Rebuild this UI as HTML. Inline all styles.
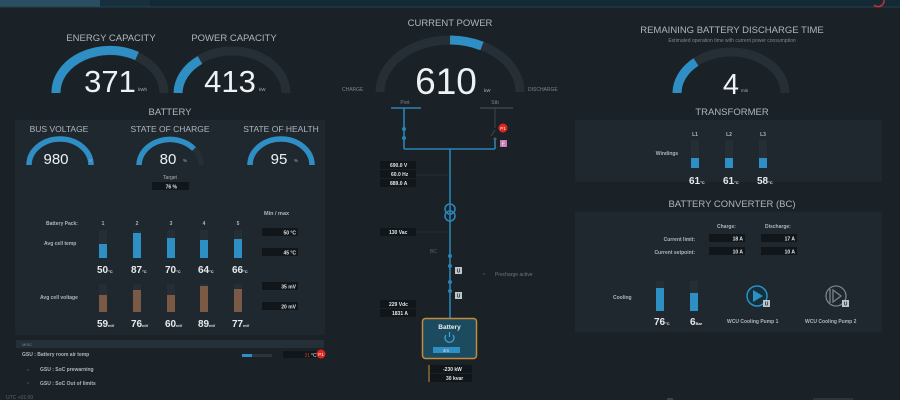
<!DOCTYPE html>
<html><head><meta charset="utf-8"><style>
html,body{margin:0;padding:0;background:#1a2228;}
svg{display:block;font-family:"Liberation Sans",sans-serif;}
</style></head><body>
<svg width="900" height="400" viewBox="0 0 900 400" xmlns="http://www.w3.org/2000/svg">
<rect width="900" height="400" fill="#1a2228"/>
<!-- top bar -->
<rect x="0" y="0" width="900" height="7" fill="#17303d"/>
<rect x="0" y="0" width="100" height="7" fill="#2a4f60"/>
<rect x="150" y="0" width="750" height="7" fill="#132a35"/>
<line x1="0" y1="7" x2="900" y2="7" stroke="#24404e"/>
<path d="M884 0 A6 6 0 0 1 874 5" stroke="#d03030" stroke-width="1.5" fill="none"/>

<!-- panels -->
<rect x="15" y="120" width="310" height="215" fill="#1f282f"/>
<rect x="16" y="340" width="308" height="8" fill="#252f37"/>
<text x="22" y="346" font-size="4" fill="#7a848b">MISC</text>
<rect x="575" y="120" width="307" height="62" fill="#1f282f"/>
<rect x="575" y="212" width="307" height="120" fill="#1f282f"/>

<g fill="none" stroke-width="9">
<path d="M56 93 A54 42 0 0 1 164 93" stroke="#262f36"/>
<path d="M56 93 A54 42 0 0 1 137 56" stroke="#2f8fc4"/>
<path d="M178 93 A54 42 0 0 1 286 93" stroke="#262f36"/>
<path d="M178 93 A54 42 0 0 1 200 60" stroke="#2f8fc4"/>
<path d="M380 92 A70 52 0 0 1 520 92" stroke="#262f36"/>
<path d="M450 40 A70 52 0 0 1 482 46" stroke="#2f8fc4"/>
<path d="M677 93 A54 41 0 0 1 785 93" stroke="#262f36"/>
<path d="M677 93 A54 41 0 0 1 696 62" stroke="#2f8fc4"/>
</g>
<g fill="none" stroke-width="5.5">
<path d="M29 165 A31 26 0 0 1 91 165" stroke="#2f8fc4"/>
<path d="M139 165 A31 26 0 0 1 201 165" stroke="#262f36"/>
<path d="M139 165 A31 26 0 0 1 194 149" stroke="#2f8fc4"/>
<path d="M250 165 A31 26 0 0 1 312 165" stroke="#2f8fc4"/>
</g>

<g fill="#aeb6bc" font-size="9.5" text-anchor="middle">
<text x="111" y="41">ENERGY CAPACITY</text>
<text x="234" y="41">POWER CAPACITY</text>
<text x="170" y="115">BATTERY</text>
<text x="59" y="132" font-size="8.5">BUS VOLTAGE</text>
<text x="170" y="132" font-size="8.5">STATE OF CHARGE</text>
<text x="281" y="132" font-size="8.5">STATE OF HEALTH</text>
<text x="450" y="26">CURRENT POWER</text>
<text x="732" y="33">REMAINING BATTERY DISCHARGE TIME</text>
<text x="732" y="115">TRANSFORMER</text>
<text x="732" y="207">BATTERY CONVERTER (BC)</text>
<text x="732" y="42" font-size="5" fill="#7c868d">Estimated operation time with current power consumption</text>
</g>
<g fill="#eef2f4" text-anchor="middle">
<text x="110" y="92" font-size="31">371</text>
<text x="230" y="92" font-size="31">413</text>
<text x="446" y="94" font-size="37">610</text>
<text x="731" y="94" font-size="29">4</text>
<text x="56" y="164" font-size="15">980</text>
<text x="168" y="164" font-size="15">80</text>
<text x="279" y="164" font-size="15">95</text>
</g>
<g fill="#aeb6bc" font-size="4.5">
<text x="138" y="91">kWh</text><text x="259" y="91">kW</text>
<text x="484" y="92">kW</text><text x="741" y="92">min</text>
<text x="89" y="162">V</text><text x="183" y="162">%</text><text x="294" y="162">%</text>
<text x="342" y="91" fill="#7a848b" font-size="5">CHARGE</text>
<text x="528" y="91" fill="#7a848b" font-size="5">DISCHARGE</text>
</g>
<text x="170" y="179" font-size="5" fill="#aeb6bc" text-anchor="middle">Target</text>
<rect x="152" y="182" width="37" height="8" fill="#10161a"/>
<text x="177" y="188.5" font-size="5" fill="#dfe4e7" text-anchor="end" font-weight="bold">76 %</text>

<!-- battery packs -->
<g font-size="5" fill="#aeb6bc" font-weight="bold">
<text x="46" y="225">Battery Pack:</text>
<text x="44" y="245">Avg cell temp</text>
<text x="40" y="299">Avg cell voltage</text>
<text x="264" y="215" font-size="5.5">Min / max</text>
<text x="103" y="225" text-anchor="middle">1</text><text x="137" y="225" text-anchor="middle">2</text><text x="171" y="225" text-anchor="middle">3</text><text x="204" y="225" text-anchor="middle">4</text><text x="238" y="225" text-anchor="middle">5</text>
</g>
<g fill="#252e35">
<rect x="99" y="230" width="8" height="28"/><rect x="133" y="230" width="8" height="28"/><rect x="167" y="230" width="8" height="28"/><rect x="200" y="230" width="8" height="28"/><rect x="234" y="230" width="8" height="28"/>
<rect x="99" y="284" width="8" height="28"/><rect x="133" y="284" width="8" height="28"/><rect x="167" y="284" width="8" height="28"/><rect x="200" y="284" width="8" height="28"/><rect x="234" y="284" width="8" height="28"/>
</g>
<g fill="#2d8fc4">
<rect x="99" y="244" width="8" height="14"/><rect x="133" y="233" width="8" height="25"/><rect x="167" y="238" width="8" height="20"/><rect x="200" y="240" width="8" height="18"/><rect x="234" y="239" width="8" height="19"/>
</g>
<g fill="#7a5a45">
<rect x="99" y="295" width="8" height="17"/><rect x="133" y="290" width="8" height="22"/><rect x="167" y="295" width="8" height="17"/><rect x="200" y="286" width="8" height="26"/><rect x="234" y="289" width="8" height="23"/>
</g>
<g font-size="10" fill="#e6eaec" font-weight="bold">
<text x="97" y="273">50<tspan font-size="4">°C</tspan></text><text x="131" y="273">87<tspan font-size="4">°C</tspan></text><text x="165" y="273">70<tspan font-size="4">°C</tspan></text><text x="198" y="273">64<tspan font-size="4">°C</tspan></text><text x="232" y="273">66<tspan font-size="4">°C</tspan></text>
<text x="97" y="327">59<tspan font-size="4">mV</tspan></text><text x="131" y="327">76<tspan font-size="4">mV</tspan></text><text x="165" y="327">60<tspan font-size="4">mV</tspan></text><text x="198" y="327">89<tspan font-size="4">mV</tspan></text><text x="232" y="327">77<tspan font-size="4">mV</tspan></text>
</g>
<g fill="#10161a"><rect x="262" y="228" width="36" height="8"/><rect x="262" y="248" width="36" height="8"/><rect x="262" y="282" width="36" height="8"/><rect x="262" y="302" width="36" height="8"/></g>
<g font-size="5" fill="#dfe4e7" text-anchor="end" font-weight="bold"><text x="296" y="234.5">50 °C</text><text x="296" y="254.5">45 °C</text><text x="296" y="288.5">35 mV</text><text x="296" y="308.5">20 mV</text></g>

<!-- misc rows -->
<g font-size="5" fill="#aeb6bc" font-weight="bold">
<text x="22" y="356">GSU : Battery room air temp</text>
<text x="40" y="371">GSU : SoC prewarning</text>
<text x="40" y="385">GSU : SoC Out of limits</text>
<text x="6" y="399" fill="#5a646b" font-weight="normal">UTC +01:00</text>
</g>
<rect x="242" y="354" width="30" height="3" fill="#2a353d"/><rect x="242" y="354" width="10" height="3" fill="#2d8fc4"/>
<rect x="283" y="351" width="35" height="7" fill="#10161a"/>
<text x="310" y="357" font-size="5" fill="#d0302a" text-anchor="end">31</text><text x="311" y="357" font-size="5" fill="#dfe4e7">°C</text>
<circle cx="321" cy="354" r="4.5" fill="#e0261f"/><text x="321" y="356" font-size="4.5" fill="#fff" text-anchor="middle">P1</text>
<circle cx="28" cy="370" r="1" fill="#3a444b"/><circle cx="28" cy="383" r="1" fill="#3a444b"/>

<!-- single line diagram -->
<text x="405" y="104" font-size="5" fill="#7a848b" text-anchor="middle">Port</text>
<text x="495" y="104" font-size="5" fill="#7a848b" text-anchor="middle">Stb</text>
<g stroke="#2a84b5" stroke-width="1.6" fill="none">
<line x1="391" y1="108" x2="421" y2="108"/>
<line x1="404" y1="108" x2="404" y2="149"/>
<line x1="404" y1="149" x2="495" y2="149"/>
<line x1="495" y1="139" x2="495" y2="149"/>
<line x1="450" y1="149" x2="450" y2="318"/>
<circle cx="450" cy="209" r="5"/><circle cx="450" cy="216" r="5"/>
</g>
<line x1="480" y1="108" x2="513" y2="108" stroke="#3a454d" stroke-width="1.5"/>
<line x1="495" y1="108" x2="495" y2="128" stroke="#3a454d" stroke-width="1"/>
<line x1="495" y1="130" x2="491" y2="136" stroke="#3a454d" stroke-width="1"/>
<g fill="#2a84b5"><circle cx="404" cy="129" r="2"/><circle cx="404" cy="138" r="2"/><circle cx="450" cy="256" r="2"/><circle cx="450" cy="266" r="2"/><circle cx="450" cy="282" r="2"/><circle cx="450" cy="291" r="2"/></g>
<circle cx="495" cy="139" r="1.5" fill="#55606a"/>
<circle cx="503" cy="128" r="4.5" fill="#e0261f"/><text x="503" y="130" font-size="4.5" fill="#fff" text-anchor="middle">P1</text>
<rect x="500" y="140" width="7" height="7" fill="#c27ab2"/><text x="503.5" y="145.5" font-size="5" fill="#fff" text-anchor="middle">E</text>
<rect x="455" y="267" width="7" height="7" fill="#bfc6cb"/><text x="458.5" y="272.5" font-size="5" fill="#1a2228" text-anchor="middle" font-weight="bold">U</text>
<rect x="455" y="292" width="7" height="7" fill="#bfc6cb"/><text x="458.5" y="297.5" font-size="5" fill="#1a2228" text-anchor="middle" font-weight="bold">U</text>
<text x="430" y="253" font-size="5" fill="#5a646b">BC</text>
<circle cx="484" cy="274" r="1" fill="#3a444b"/>
<text x="495" y="276" font-size="5" fill="#6e787f">Precharge active</text>
<g fill="#10161a"><rect x="380" y="161" width="36" height="8"/><rect x="380" y="170" width="36" height="8"/><rect x="380" y="179" width="36" height="8"/><rect x="380" y="228" width="36" height="8"/><rect x="380" y="300" width="36" height="8"/><rect x="380" y="309" width="36" height="8"/><rect x="430" y="365" width="42" height="8"/><rect x="430" y="374" width="42" height="8"/></g>
<line x1="429" y1="365" x2="429" y2="382" stroke="#c58a3a"/>
<g font-size="5" fill="#dfe4e7" font-weight="bold"><text x="390" y="167">690.0 V</text><text x="391" y="176">60.0 Hz</text><text x="390" y="185">889.0 A</text><text x="389" y="234">130 Vac</text><text x="389" y="306">229 Vdc</text><text x="392" y="315">1831 A</text><text x="443" y="371">-230 kW</text><text x="446" y="380">30 kvar</text></g>
<g stroke="#2e3840" stroke-width="0.6"><line x1="416" y1="175" x2="450" y2="175"/><line x1="416" y1="232" x2="450" y2="232"/></g>
<!-- battery box -->
<rect x="422.5" y="318.5" width="54" height="40" rx="3" fill="#1c4a5e" stroke="#c58a3a" stroke-width="1.5"/>
<text x="449.5" y="329" font-size="6.5" fill="#e8eef2" text-anchor="middle" font-weight="bold">Battery</text>
<path d="M446 335 A4.5 4.5 0 1 0 453 335" stroke="#3fa6df" fill="none" stroke-width="1.2"/><line x1="449.5" y1="332" x2="449.5" y2="337" stroke="#3fa6df" stroke-width="1.2"/>
<rect x="433" y="347" width="27" height="6" fill="#2d8fc4"/><text x="446" y="352" font-size="4.5" fill="#dfe4e7" text-anchor="middle">4m</text>

<!-- transformer panel -->
<g font-size="5" fill="#aeb6bc" text-anchor="middle" font-weight="bold"><text x="695" y="136">L1</text><text x="729" y="136">L2</text><text x="763" y="136">L3</text><text x="667" y="155">Windings</text></g>
<g fill="#252e35"><rect x="691" y="140" width="8" height="28"/><rect x="725" y="140" width="8" height="28"/><rect x="759" y="140" width="8" height="28"/></g>
<g fill="#2d8fc4"><rect x="691" y="158" width="8" height="10"/><rect x="725" y="158" width="8" height="10"/><rect x="759" y="158" width="8" height="10"/></g>
<g font-size="10" fill="#e6eaec" font-weight="bold"><text x="689" y="184">61<tspan font-size="4">°C</tspan></text><text x="723" y="184">61<tspan font-size="4">°C</tspan></text><text x="757" y="184">58<tspan font-size="4">°C</tspan></text></g>

<!-- converter panel -->
<g font-size="5" fill="#aeb6bc" font-weight="bold"><text x="717" y="228">Charge:</text><text x="765" y="228">Discharge:</text>
<text x="695" y="241" text-anchor="end">Current limit:</text><text x="695" y="254" text-anchor="end">Current setpoint:</text>
<text x="613" y="299">Cooling</text>
<text x="727" y="323">WCU Cooling Pump 1</text><text x="805" y="323">WCU Cooling Pump 2</text></g>
<g fill="#10161a"><rect x="709" y="234" width="36" height="8"/><rect x="761" y="234" width="36" height="8"/><rect x="709" y="247" width="36" height="8"/><rect x="761" y="247" width="36" height="8"/></g>
<g font-size="5" fill="#dfe4e7" text-anchor="end" font-weight="bold"><text x="743" y="240.5">18 A</text><text x="795" y="240.5">17 A</text><text x="743" y="253.5">10 A</text><text x="795" y="253.5">10 A</text></g>
<g fill="#252e35"><rect x="656" y="281" width="8" height="30"/><rect x="690" y="281" width="8" height="30"/></g>
<g fill="#2d8fc4"><rect x="656" y="288" width="8" height="23"/><rect x="690" y="293" width="8" height="18"/></g>
<g font-size="10" fill="#e6eaec" font-weight="bold"><text x="654" y="325">76<tspan font-size="4">°C</tspan></text><text x="690" y="325">6<tspan font-size="4">Bar</tspan></text></g>
<circle cx="757" cy="296" r="10" fill="#15303d" stroke="#2d8fc4" stroke-width="1.5"/>
<path d="M753 290 L763 296 L753 302 Z" fill="#2d8fc4"/>
<circle cx="836" cy="296" r="10" fill="none" stroke="#7a848b" stroke-width="1.3"/>
<path d="M833 290 L841 296 L833 302 Z M830 289 L830 303" fill="none" stroke="#7a848b" stroke-width="1.3"/>
<rect x="763" y="300" width="7" height="7" fill="#bfc6cb"/><text x="766.5" y="305.5" font-size="5" fill="#1a2228" text-anchor="middle" font-weight="bold">U</text>
<rect x="842" y="300" width="7" height="7" fill="#bfc6cb"/><text x="845.5" y="305.5" font-size="5" fill="#1a2228" text-anchor="middle" font-weight="bold">U</text>

<rect x="813" y="398" width="40" height="2" fill="#2a353d"/>
<rect x="667" y="398" width="6" height="2" fill="#3a444b"/>
</svg>
</body></html>
